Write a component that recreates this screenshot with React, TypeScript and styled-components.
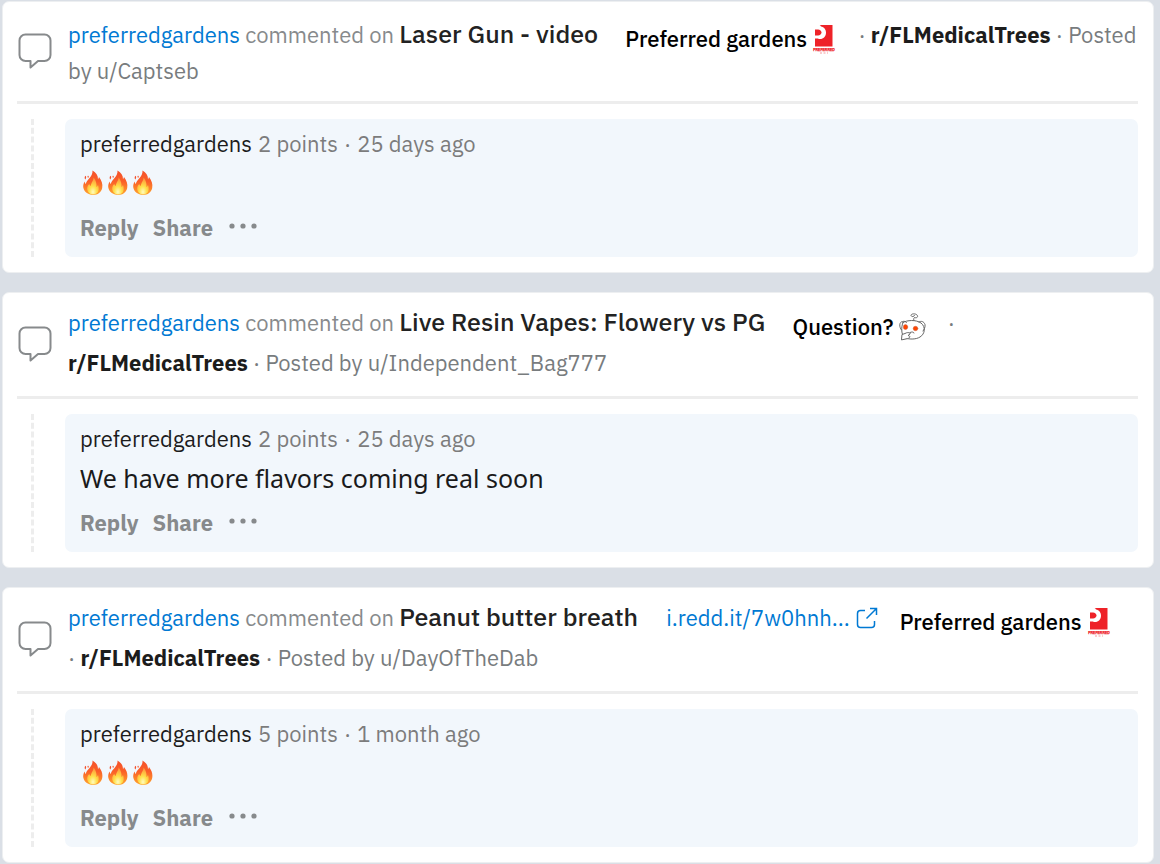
import React from "react";
import styled, { createGlobalStyle } from "styled-components";

const GlobalStyle = createGlobalStyle`
  * { box-sizing: border-box; }
  body {
    margin: 0;
    background: #dadfe6;
    font-family: "IBM Plex Sans", Roboto, "Noto Sans", sans-serif;
    font-size: 22px;
    line-height: 32px;
    color: #1c1c1c;
  }
  a { color: inherit; text-decoration: none; }
  a:hover { text-decoration: underline; }
  svg { display: block; flex: none; }
`;

const Feed = styled.main`
  display: flex;
  flex-direction: column;
  gap: 19px;
  padding: 1px 6px 19px 2px;
`;

const Card = styled.article`
  background: #fff;
  border: 1px solid #edeff1;
  border-radius: 7px;
  padding: 0 15px 15px 14px;
`;

const Header = styled.header`
  display: flex;
  align-items: center;
  gap: 16px;
  padding: 13px 0 14px 1px;
  border-bottom: 3px solid #ededed;
`;

const Summary = styled.div`
  flex: 1;
  min-width: 0;
  color: #787c7e;
`;

const Author = styled.a`
  color: #0079d3;
`;

const Action = styled.span`
  color: #878a8c;
`;

const Title = styled.a`
  font-size: 25px;
  font-weight: 500;
  color: #222;
`;

const Flair = styled.span`
  display: inline-flex;
  align-items: center;
  gap: 5px;
  margin: 0 17px 0 22px;
  vertical-align: -4px;
  font-weight: 500;
  color: #000;
`;

const Outbound = styled.a`
  display: inline-flex;
  align-items: center;
  gap: 6px;
  margin-left: 23px;
  color: #0079d3;
`;

const Community = styled.a`
  display: inline-block;
  line-height: 39px;
  font-weight: 700;
  color: #1c1c1c;
`;

const Thread = styled.div`
  display: flex;
  gap: 31px;
  padding: 15px 0 0 14px;
`;

const ThreadLine = styled.div`
  border-left: 3px dashed #ededed;
`;

const Comment = styled.section`
  flex: 1;
  min-width: 0;
  padding: 9px 15px 12px;
  border-radius: 7px;
  background: #f2f7fc;
`;

const Byline = styled.div`
  display: flex;
  gap: 6px;
  color: #7c7c7c;
`;

const Name = styled.a`
  color: #1c1c1c;
`;

const Body = styled.p`
  display: flex;
  align-items: center;
  margin: 0;
  height: 45px;
  font-family: "Noto Sans", sans-serif;
  font-size: 25px;
  color: #1a1a1b;
`;

const Actions = styled.div`
  display: flex;
  align-items: center;
  gap: 14px;
  height: 40px;
  padding-top: 6px;
`;

const ActionButton = styled.button`
  display: flex;
  padding: 0;
  border: 0;
  background: none;
  font: inherit;
  font-weight: 700;
  color: #878a8c;
  cursor: pointer;
`;

const MoreButton = styled(ActionButton)`
  padding: 0 2px 5px;
`;

const BubbleIcon = () => (
  <svg width="34" height="36" viewBox="0 0 34 36" fill="none" stroke="#878a8c" strokeWidth="2" strokeLinejoin="round" aria-hidden="true">
    <path d="M7.500 1.500h19a6 6 0 0 1 6 6v14.500a6 6 0 0 1-6 6H20l-7.500 6.500V28h-5a6 6 0 0 1-6-6V7.500a6 6 0 0 1 6-6z" />
  </svg>
);

const Fire = () => (
  <svg width="25" height="28" viewBox="0 0 25 28" role="img" aria-label="fire">
    <defs>
      <linearGradient id="flame" x1="0" y1="0" x2="0" y2="1">
        <stop offset="0" stopColor="#f4502a" />
        <stop offset="0.45" stopColor="#fa6028" />
        <stop offset="1" stopColor="#ffa52e" />
      </linearGradient>
      <radialGradient id="core" cx="0.5" cy="0.85" r="0.75">
        <stop offset="0" stopColor="#fffbc0" />
        <stop offset="0.45" stopColor="#ffe04a" />
        <stop offset="1" stopColor="#ff9c3b" />
      </radialGradient>
    </defs>
    <path fill="url(#flame)" d="M12.500 1.500c3.600 2.200 5.600 4.700 5.500 8.800.6-.8.9-1.400 1-2.200 2.800 3.600 3.900 7.200 3.200 10.800-.8 4.200-4.300 7-9.200 7-5.200 0-8.900-3-9.700-7.300-.4-2.300.3-4.400 1.300-6.200.2 1.200.5 1.900 1.200 2.700C6.400 10.300 13 8.200 12.500 1.500z" />
    <path fill="#f4502a" d="M5.500 6.800c1 1 .9 2.300-.3 3.700-.8-1.300-.7-2.600.3-3.700zM8 6.400l.9 1.400-.8 1.200-.7-1.200z" />
    <path fill="url(#core)" d="M13.500 8.500c.4 2.500-2.200 4.800-2.800 8.500-.8-.4-1.200-1.100-1.400-2-2.300 2-2.700 4.700-1.400 7.600 1.200 2 3 2.900 5.100 2.900 3.700 0 5.600-2.300 5.700-5.200.1-1.900-.3-3.300-.8-4.300-.3 1-.7 1.600-1.400 2C16.900 14.500 15.800 11 13.500 8.500z" />
  </svg>
);

const BrandLogo = () => (
  <svg width="24" height="30" viewBox="0 0 48 60" role="img" aria-label="Preferred">
    <path fill="#ee2228" d="M6 2h35v43H6z" />
    <path fill="#fff" d="M5 2h10c2 0 2 2 3 3 6 1 10 6 10 12 0 8-5 13-12 13-2 0-3 0-4-1H5z" />
    <path fill="#ee2228" d="M6 11h6c4 0 7 3 7 6s-3 6-7 6H6z" />
    <text x="24" y="54" textAnchor="middle" fontFamily="Liberation Sans" fontSize="7" fontWeight="700" fill="#ee2228" stroke="#ee2228" strokeWidth="0.500">PREFERRED</text>
    <path stroke="#f79a9c" strokeWidth="2" strokeDasharray="4 3" d="M16 58h16" />
  </svg>
);

const ThinkingSnoo = () => (
  <svg width="27" height="28" viewBox="0 0 27 28" fill="none" stroke="#666" strokeWidth="1" strokeLinecap="round" role="img" aria-label="thinking">
    <path fill="#fff" d="M4 9.500C8 7 17 6.500 22 10c5 4 4 11-1 14-4 2.500-10 2.500-15 1C2 22 2 14 4 9.500z" />
    <path d="M2.500 17C0 14 0 9 3.500 8.500c2-.5 3 0 4 1M20 9c2-1.500 5-.5 6 2.500.5 2.500-1 5.500-2 6.500M15 7.500c-.5-1-.5-2 .5-3 2.500 1 4-1 2.500-2.500C16.500.3 12 .5 12 2.500c.5 1.500 3 1.500 3.500 0" />
    <path fill="#fff" d="M2.500 26.500l.5-5 3-1c2-1.500 6-1 5 .5l-2 1.500c3 .5 2 2.500 0 3z" />
    <path d="M11 19.500c2-1 4-.5 4 .5" />
    <ellipse cx="6.500" cy="14" rx="2.200" ry="2.500" fill="#ff4500" stroke="#c8583a" strokeWidth="0.500" />
    <ellipse cx="16.500" cy="15.500" rx="2.300" ry="2.200" fill="#ff4500" stroke="#c8583a" strokeWidth="0.500" />
  </svg>
);

const OutboundIcon = () => (
  <svg width="22" height="22" viewBox="0 0 22 22" fill="none" stroke="#0079d3" strokeWidth="1.500" aria-hidden="true">
    <path d="M9 3.500H4.500A3 3 0 0 0 1.500 6.500v11a3 3 0 0 0 3 3h11a3 3 0 0 0 3-3V14M10.500 11.500L20.500 1.500M14 1.500h6.500v6.500" />
  </svg>
);

const MoreIcon = () => (
  <svg width="28" height="6" viewBox="0 0 28 6" fill="#878a8c" aria-hidden="true">
    <circle cx="3" cy="3" r="2.600" />
    <circle cx="14" cy="3" r="2.600" />
    <circle cx="25" cy="3" r="2.600" />
  </svg>
);

type Activity = {
  title: string;
  link?: string;
  flair: "brand" | "question";
  poster: string;
  points: number;
  age: string;
  body?: string;
};

const activities: Activity[] = [
  { title: "Laser Gun - video", flair: "brand", poster: "Captseb", points: 2, age: "25 days ago" },
  {
    title: "Live Resin Vapes: Flowery vs PG",
    flair: "question",
    poster: "Independent_Bag777",
    points: 2,
    age: "25 days ago",
    body: "We have more flavors coming real soon",
  },
  {
    title: "Peanut butter breath",
    link: "i.redd.it/7w0hnh...",
    flair: "brand",
    poster: "DayOfTheDab",
    points: 5,
    age: "1 month ago",
  },
];

const ActivityCard = ({ title, link, flair, poster, points, age, body }: Activity) => (
  <Card>
    <Header>
      <BubbleIcon />
      <Summary>
        <Author href="#user">preferredgardens</Author> <Action>commented on</Action>{" "}
        <Title href="#post">{title}</Title>{" "}
        {link && (
          <Outbound href="#link">
            {link}
            <OutboundIcon />
          </Outbound>
        )}
        <Flair>
          {flair === "brand" ? "Preferred gardens" : "Question?"}
          {flair === "brand" ? <BrandLogo /> : <ThinkingSnoo />}
        </Flair>{" "}
        · <Community href="#community">r/FLMedicalTrees</Community> · Posted by{" "}
        <a href="#poster">u/{poster}</a>
      </Summary>
    </Header>
    <Thread>
      <ThreadLine />
      <Comment>
        <Byline>
          <Name href="#user">preferredgardens</Name>
          <span>{points} points</span>
          <span>·</span>
          <span>{age}</span>
        </Byline>
        <Body>
          {body ?? (
            <>
              <Fire />
              <Fire />
              <Fire />
            </>
          )}
        </Body>
        <Actions>
          <ActionButton type="button">Reply</ActionButton>
          <ActionButton type="button">Share</ActionButton>
          <MoreButton type="button" aria-label="More options">
            <MoreIcon />
          </MoreButton>
        </Actions>
      </Comment>
    </Thread>
  </Card>
);

export default function App() {
  return (
    <>
      <GlobalStyle />
      <Feed>
        {activities.map((activity) => (
          <ActivityCard key={activity.title} {...activity} />
        ))}
      </Feed>
    </>
  );
}
